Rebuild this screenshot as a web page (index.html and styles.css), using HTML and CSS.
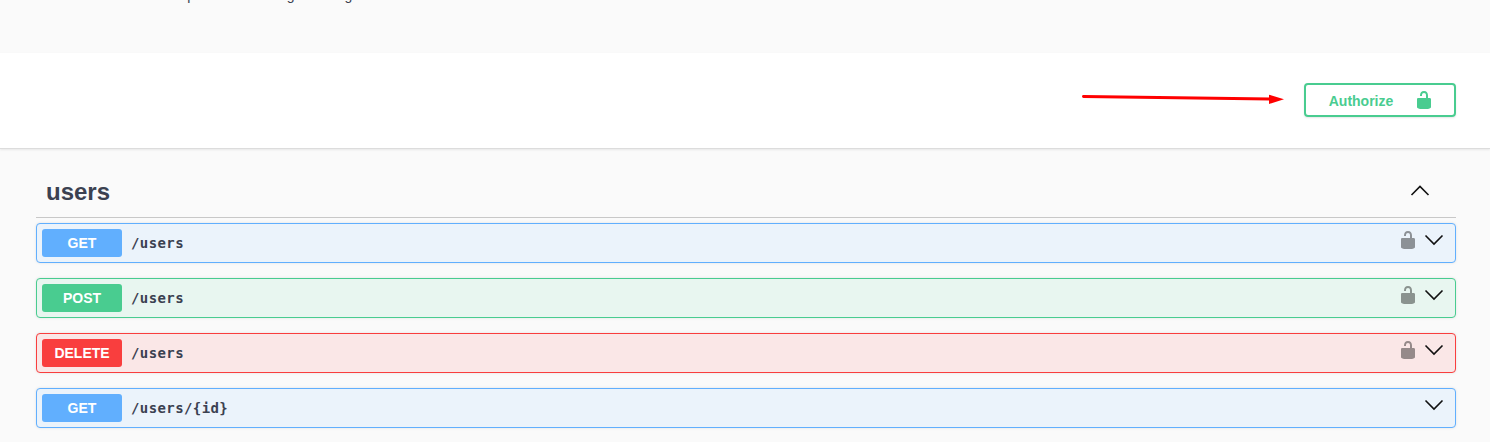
FILE: index.html
```html
<!DOCTYPE html>
<html lang="en">

  <head>
    <meta charset="UTF-8">
    <meta name="viewport" content="width=device-width, initial-scale=1.0">
    <title>Swagger UI</title>

    <link rel="stylesheet" href="styles.css">

  </head>

  <body>

    <div class="info__sec">
      <p class="info__text">Demo spec for all manage some great</p>
    </div>

    <div class="scheme__sec">
      <svg class="arrow" width="204" height="12" viewBox="0 0 204 12">
        <path d="M1.5 2.5 L188 5" stroke="#f00" stroke-width="3" stroke-linecap="round" fill="none"/>
        <path d="M187 0.7 L202 5.3 L187 10 Z" fill="#f00"/>
      </svg>
      <button class="authorize__btn">
        <span class="authorize__label">Authorize</span>
        <svg width="20" height="20" viewBox="0 0 20 20">
          <path fill="#49cc90" d="M15.8 8H14V5.6C14 2.703 12.665 1 10 1 7.334 1 6 2.703 6 5.6V6h2v-.801C8 3.754 8.797 3 10 3c1.203 0 2 .754 2 2.199V8H4c-.553 0-1 .646-1 1.199V17c0 .549.428 1.139.951 1.307l1.197.387C5.672 18.861 6.55 19 7.1 19h5.8c.549 0 1.428-.139 1.951-.307l1.196-.387c.524-.167.953-.757.953-1.306V9.199C17 8.646 16.352 8 15.8 8z"/>
        </svg>
      </button>
    </div>

    <div class="tag__sec">
      <div class="tag__head">
        <h3>users</h3>
        <svg class="tag__arrow" width="20" height="20" viewBox="0 0 20 20">
          <path d="M1.5 15 L10 6.5 L18.5 15" fill="none" stroke="#111" stroke-width="1.6"/>
        </svg>
      </div>

      <div class="op op--get">
        <span class="op__method">GET</span>
        <span class="op__path">/users</span>
        <svg class="op__lock" width="20" height="20" viewBox="0 0 20 20">
          <path d="M15.8 8H14V5.6C14 2.703 12.665 1 10 1 7.334 1 6 2.703 6 5.6V6h2v-.801C8 3.754 8.797 3 10 3c1.203 0 2 .754 2 2.199V8H4c-.553 0-1 .646-1 1.199V17c0 .549.428 1.139.951 1.307l1.197.387C5.672 18.861 6.55 19 7.1 19h5.8c.549 0 1.428-.139 1.951-.307l1.196-.387c.524-.167.953-.757.953-1.306V9.199C17 8.646 16.352 8 15.8 8z"/>
        </svg>
        <svg class="op__arrow" width="20" height="20" viewBox="0 0 20 20">
          <path d="M1.5 5.5 L10 14 L18.5 5.5" fill="none" stroke="#111" stroke-width="1.6"/>
        </svg>
      </div>

      <div class="op op--post">
        <span class="op__method">POST</span>
        <span class="op__path">/users</span>
        <svg class="op__lock" width="20" height="20" viewBox="0 0 20 20">
          <path d="M15.8 8H14V5.6C14 2.703 12.665 1 10 1 7.334 1 6 2.703 6 5.6V6h2v-.801C8 3.754 8.797 3 10 3c1.203 0 2 .754 2 2.199V8H4c-.553 0-1 .646-1 1.199V17c0 .549.428 1.139.951 1.307l1.197.387C5.672 18.861 6.55 19 7.1 19h5.8c.549 0 1.428-.139 1.951-.307l1.196-.387c.524-.167.953-.757.953-1.306V9.199C17 8.646 16.352 8 15.8 8z"/>
        </svg>
        <svg class="op__arrow" width="20" height="20" viewBox="0 0 20 20">
          <path d="M1.5 5.5 L10 14 L18.5 5.5" fill="none" stroke="#111" stroke-width="1.6"/>
        </svg>
      </div>

      <div class="op op--delete">
        <span class="op__method">DELETE</span>
        <span class="op__path">/users</span>
        <svg class="op__lock" width="20" height="20" viewBox="0 0 20 20">
          <path d="M15.8 8H14V5.6C14 2.703 12.665 1 10 1 7.334 1 6 2.703 6 5.6V6h2v-.801C8 3.754 8.797 3 10 3c1.203 0 2 .754 2 2.199V8H4c-.553 0-1 .646-1 1.199V17c0 .549.428 1.139.951 1.307l1.197.387C5.672 18.861 6.55 19 7.1 19h5.8c.549 0 1.428-.139 1.951-.307l1.196-.387c.524-.167.953-.757.953-1.306V9.199C17 8.646 16.352 8 15.8 8z"/>
        </svg>
        <svg class="op__arrow" width="20" height="20" viewBox="0 0 20 20">
          <path d="M1.5 5.5 L10 14 L18.5 5.5" fill="none" stroke="#111" stroke-width="1.6"/>
        </svg>
      </div>

      <div class="op op--get">
        <span class="op__method">GET</span>
        <span class="op__path">/users/{id}</span>
        <svg class="op__arrow" width="20" height="20" viewBox="0 0 20 20">
          <path d="M1.5 5.5 L10 14 L18.5 5.5" fill="none" stroke="#111" stroke-width="1.6"/>
        </svg>
      </div>
    </div>

  </body>

</html>
```

FILE: styles.css
```css
* {
  margin: 0;
  padding: 0;
  box-sizing: border-box;
}

html,
body {
  height: 442px;
  overflow: hidden;
}

body {
  background-color: #fafafa;
  font-family: "Liberation Sans", Arial, sans-serif;
  color: #3b4151;
}

.info__sec {
  height: 53px;
  overflow: hidden;
}

.info__text {
  margin-top: -13px;
  padding-left: 139px;
  font-size: 14px;
  line-height: 16px;
}

.scheme__sec {
  display: flex;
  justify-content: flex-end;
  align-items: center;
  height: 96px;
  padding: 0 34px 2px 0;
  background-color: #ffffff;
  border-bottom: 1px solid #dcdcdc;
  box-shadow: 0 1px 2px 0 rgba(0, 0, 0, 0.08);
}

.arrow {
  margin-right: 18px;
}

.authorize__btn {
  display: flex;
  justify-content: center;
  align-items: center;
  width: 152px;
  height: 34px;
  padding-left: 3px;
  background: transparent;
  border: 2px solid #49cc90;
  border-radius: 4px;
  box-shadow: 0 1px 2px rgba(0, 0, 0, 0.1);
  font-family: "Liberation Sans", Arial, sans-serif;
  font-size: 14px;
  font-weight: 700;
  color: #49cc90;
}

.authorize__label {
  padding-top: 2px;
}

.authorize__btn svg {
  margin-left: 21px;
}

.tag__sec {
  padding: 0 34px 0 36px;
}

.tag__head {
  display: flex;
  justify-content: space-between;
  align-items: center;
  height: 69px;
  padding: 18px 26px 0 10px;
  border-bottom: 1px solid #c8c8c8;
  margin-bottom: 5px;
}

.tag__head h3 {
  font-size: 24px;
  font-weight: 700;
}

.tag__arrow {
  margin-top: -4px;
}

.op {
  display: flex;
  align-items: center;
  height: 40px;
  margin-bottom: 15px;
  padding: 0 11px 0 5px;
  border: 1px solid;
  border-radius: 4px;
  box-shadow: 0 0 3px rgba(0, 0, 0, 0.1);
}

.op:last-child {
  margin-bottom: 0;
}

.op__method {
  width: 80px;
  height: 28px;
  line-height: 28px;
  text-align: center;
  border-radius: 3px;
  color: #ffffff;
  font-size: 14px;
  font-weight: 700;
}

.op__path {
  flex: 1;
  padding-left: 9px;
  font-family: "DejaVu Sans Mono", monospace;
  font-size: 14px;
  font-weight: 700;
  letter-spacing: 0.4px;
  color: #3b4151;
}

.op__lock {
  margin-top: -6px;
  margin-right: 6px;
  opacity: 0.4;
  fill: #000;
}

.op__arrow {
  margin-top: -6px;
}

.op--get {
  background-color: #ebf3fb;
  border-color: #61affe;
}

.op--get .op__method {
  background-color: #61affe;
}

.op--post {
  background-color: #e8f6f0;
  border-color: #49cc90;
}

.op--post .op__method {
  background-color: #49cc90;
}

.op--delete {
  background-color: #fae7e7;
  border-color: #f93e3e;
}

.op--delete .op__method {
  background-color: #f93e3e;
}
```
